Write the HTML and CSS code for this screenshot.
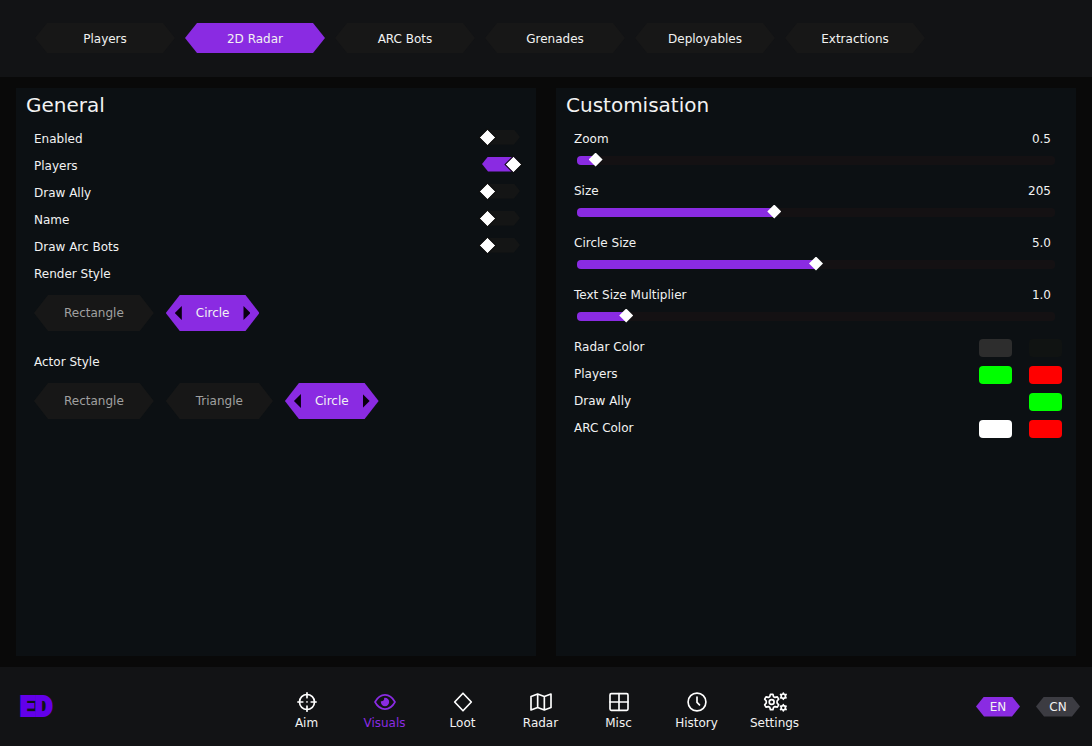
FILE: index.html
```html
<!DOCTYPE html>
<html lang="en">
<head>
<meta charset="utf-8">
<meta name="viewport" content="width=device-width, initial-scale=1">
<title>2D Radar</title>
<link rel="stylesheet" href="styles.css">
</head>
<body>
<header class="topbar">
  <nav class="tabs" aria-label="Visuals sections">
    <button class="tab" type="button">Players</button>
    <button class="tab tab-active" type="button" aria-current="page">2D Radar</button>
    <button class="tab" type="button">ARC Bots</button>
    <button class="tab" type="button">Grenades</button>
    <button class="tab" type="button">Deployables</button>
    <button class="tab" type="button">Extractions</button>
  </nav>
</header>

<main class="panels">
  <section class="panel">
    <h2 class="panel-title">General</h2>
    <label class="row">Enabled<input class="toggle" type="checkbox"></label>
    <label class="row">Players<input class="toggle" type="checkbox" checked></label>
    <label class="row">Draw Ally<input class="toggle" type="checkbox"></label>
    <label class="row">Name<input class="toggle" type="checkbox"></label>
    <label class="row">Draw Arc Bots<input class="toggle" type="checkbox"></label>
    <fieldset class="choice-group">
      <legend class="choice-legend">Render Style</legend>
      <div class="choices">
        <label class="choice"><input class="choice-input" type="radio" name="render">Rectangle</label>
        <label class="choice"><input class="choice-input" type="radio" name="render" checked>Circle</label>
      </div>
    </fieldset>
    <fieldset class="choice-group">
      <legend class="choice-legend">Actor Style</legend>
      <div class="choices">
        <label class="choice"><input class="choice-input" type="radio" name="actor">Rectangle</label>
        <label class="choice"><input class="choice-input" type="radio" name="actor">Triangle</label>
        <label class="choice"><input class="choice-input" type="radio" name="actor" checked>Circle</label>
      </div>
    </fieldset>
  </section>

  <section class="panel">
    <h2 class="panel-title">Customisation</h2>
    <div class="slider-row">
      <label for="zoom">Zoom</label><output for="zoom">0.5</output>
      <input class="slider" id="zoom" type="range" min="0" max="20" step="0.1" value="0.5" style="--fill: 0.025">
    </div>
    <div class="slider-row">
      <label for="size">Size</label><output for="size">205</output>
      <input class="slider" id="size" type="range" min="0" max="500" value="205" style="--fill: 0.41">
    </div>
    <div class="slider-row">
      <label for="circle">Circle Size</label><output for="circle">5.0</output>
      <input class="slider" id="circle" type="range" min="0" max="10" step="0.1" value="5" style="--fill: 0.5">
    </div>
    <div class="slider-row">
      <label for="text">Text Size Multiplier</label><output for="text">1.0</output>
      <input class="slider" id="text" type="range" min="0.1" max="10" step="0.1" value="1" style="--fill: 0.091">
    </div>
    <div class="row color-row">Radar Color
      <span class="swatches">
        <button class="swatch swatch-gray" type="button" aria-label="Radar background color"></button>
        <button class="swatch swatch-dark" type="button" aria-label="Radar border color"></button>
      </span>
    </div>
    <div class="row color-row">Players
      <span class="swatches">
        <button class="swatch swatch-green" type="button" aria-label="Players visible color"></button>
        <button class="swatch swatch-red" type="button" aria-label="Players hidden color"></button>
      </span>
    </div>
    <div class="row color-row">Draw Ally
      <span class="swatches">
        <button class="swatch swatch-green" type="button" aria-label="Ally color"></button>
      </span>
    </div>
    <div class="row color-row">ARC Color
      <span class="swatches">
        <button class="swatch swatch-white" type="button" aria-label="ARC visible color"></button>
        <button class="swatch swatch-red" type="button" aria-label="ARC hidden color"></button>
      </span>
    </div>
  </section>
</main>

<footer class="dock">
  <div class="logo">ED</div>
  <nav class="menu" aria-label="Main">
    <button class="menu-item" type="button">
      <svg class="icon" viewBox="0 0 24 24"><circle cx="12" cy="12" r="9"/><path d="M12 1v6M12 17v6M1 12h6M17 12h6M12 11.900v.2"/></svg>
      Aim
    </button>
    <button class="menu-item menu-item-active" type="button" aria-current="page">
      <svg class="icon icon-wide" viewBox="0 0 28 24"><path d="M2 12C5 6.500 9 3.500 14 3.500s9 3 12 8.500c-3 5.500-7 8.500-12 8.500S5 17.500 2 12z"/><path class="solid" d="M14 7a5 5 0 1 1-5 5c0-.4 0-.7.100-1 1.900.6 4.300-1 3.900-3.900.3-.1.700-.1 1-.1z"/></svg>
      Visuals
    </button>
    <button class="menu-item" type="button">
      <svg class="icon" viewBox="0 0 24 24"><path d="M12 1.500 22 12 12 22.500 2 12z"/></svg>
      Loot
    </button>
    <button class="menu-item" type="button">
      <svg class="icon icon-wide" viewBox="0 0 28 24"><path d="M2 5.500l8-3 8 3 8-3v16l-8 3-8-3-8 3zM10 2.500v16M18 5.500v16"/></svg>
      Radar
    </button>
    <button class="menu-item" type="button">
      <svg class="icon" viewBox="0 0 24 24"><rect x="1.200" y="2" width="21.600" height="20" rx="1.500"/><path d="M12 2v20M1.200 12h21.600"/></svg>
      Misc
    </button>
    <button class="menu-item" type="button">
      <svg class="icon" viewBox="0 0 24 24"><circle cx="12" cy="12" r="10.700"/><path d="M12 6v6.500l3 3"/></svg>
      History
    </button>
    <button class="menu-item" type="button">
      <svg class="icon icon-gears" viewBox="0 0 30 24"><path d="M9.500 2.800h3l.8 2.800 1.700.9 2.800-.6 1.600 2.700-1.900 2.200v2.400l1.900 2.200-1.600 2.700-2.800-.6-1.700.9-.8 2.800h-3l-.8-2.800-1.700-.9-2.800.6-1.600-2.700 1.900-2.200v-2.400l-1.900-2.200 1.600-2.700 2.800.6 1.700-.9z"/><circle cx="11" cy="12" r="2.900"/><circle cx="25" cy="5" r="2.600"/><circle cx="25" cy="19" r="2.600"/><path d="M25 1.200v1M25 7.800v1M21.700 3l.9.600M27.400 6.400l.9.600M21.700 7l.9-.6M27.400 3.600l.9-.6M25 15.200v1M25 21.800v1M21.700 17l.9.600M27.400 20.400l.9.600M21.700 21l.9-.6M27.400 17.600l.9-.6"/></svg>
      Settings
    </button>
  </nav>
  <div class="languages">
    <button class="language language-active" type="button">EN</button>
    <button class="language" type="button">CN</button>
  </div>
</footer>
</body>
</html>
```

FILE: styles.css
```css
:root {
  --accent: #8a2be2;
  --text: #f2f2f2;
  --bar: #121315;
  --panel: #0c1013;
  --control: #171717;
}

* { box-sizing: border-box; }

body {
  margin: 0;
  min-height: 100vh;
  display: flex;
  flex-direction: column;
  background: #090909;
  color: var(--text);
  font-family: "DejaVu Sans", sans-serif;
  font-size: 12px;
  line-height: 16px;
}

button {
  border: 0;
  padding: 0;
  background: none;
  color: inherit;
  font: inherit;
  cursor: pointer;
}

.topbar {
  padding: 23px 35px 24px;
  background: var(--bar);
}

.tabs { display: flex; gap: 10px; }

.tab {
  width: 140px;
  height: 30px;
  padding-top: 2px;
  background: var(--control);
  clip-path: polygon(12px 0, calc(100% - 12px) 0, 100% 50%, calc(100% - 12px) 100%, 12px 100%, 0 50%);
}

.tab-active { background: var(--accent); }

.panels {
  flex: 1;
  display: grid;
  grid-template-columns: 1fr 1fr;
  gap: 20px;
  padding: 11px 16px;
}

.panel {
  padding: 4px 10px;
  background: var(--panel);
}

.panel-title {
  margin: 0 0 7px;
  font-size: 20px;
  line-height: 26px;
  font-weight: 400;
}

.row {
  display: flex;
  align-items: center;
  justify-content: space-between;
  height: 27px;
  padding: 0 4px 0 8px;
}

.toggle {
  appearance: none;
  position: relative;
  width: 42px;
  height: 16px;
  margin: 0 0 2px;
}

.toggle::before {
  content: "";
  position: absolute;
  inset: 0 2px 1px;
  background: #141515;
  clip-path: polygon(6px 0, calc(100% - 6px) 0, 100% 50%, calc(100% - 6px) 100%, 6px 100%, 0 50%);
}

.toggle::after {
  content: "";
  position: absolute;
  top: 2px;
  left: 2px;
  width: 11px;
  height: 11px;
  background: #fff;
  outline: 1px solid #111;
  transform: rotate(45deg);
}

.toggle:checked::before { background: var(--accent); }
.toggle:checked::after { left: 28px; }

.choice-group {
  margin: 0;
  border: 0;
  padding: 0 8px 10px;
}

.choice-legend { padding: 6px 0; }

.choices { display: flex; gap: 12px; padding: 7px 0; }

.choice {
  position: relative;
  height: 36px;
  padding: 0 30px;
  line-height: 36px;
  color: #a0a0a0;
  background: var(--control);
  clip-path: polygon(14px 0, calc(100% - 14px) 0, 100% 50%, calc(100% - 14px) 100%, 14px 100%, 0 50%);
}

.choice:has(:checked) { background: var(--accent); color: var(--text); }

.choice:has(:checked)::before,
.choice:has(:checked)::after {
  content: "";
  position: absolute;
  top: 11px;
  width: 7px;
  height: 14px;
  background: #08000f;
}

.choice:has(:checked)::before { left: 9px; clip-path: polygon(100% 0, 100% 100%, 0 50%); }
.choice:has(:checked)::after { right: 9px; clip-path: polygon(0 0, 100% 50%, 0 100%); }

.choice-input { position: absolute; opacity: 0; margin: 0; }

.slider-row {
  display: grid;
  grid-template-columns: 1fr auto;
  row-gap: 5px;
  height: 52px;
  padding: 6px 15px 0 8px;
  align-content: start;
}

.slider {
  appearance: none;
  grid-column: 1 / -1;
  height: 16px;
  margin: 0 -4px 0 3px;
  background: none;
}

.slider::-webkit-slider-runnable-track {
  height: 9px;
  border-radius: 4px;
  background: linear-gradient(to right, var(--accent) calc(7px + var(--fill) * (100% - 14px)), #141113 0);
}

.slider::-webkit-slider-thumb {
  appearance: none;
  width: 14px;
  height: 14px;
  margin-top: -3px;
  background: #fff;
  clip-path: polygon(50% 0, 100% 50%, 50% 100%, 0 50%);
}

.swatches { display: flex; gap: 17px; padding-top: 2px; }

.swatch { width: 33px; height: 18px; border-radius: 4px; }
.swatch-gray { background: #2d2d2d; }
.swatch-dark { background: #101312; }
.swatch-green { background: #0f0; }
.swatch-red { background: #f00; }
.swatch-white { background: #fff; }

.dock {
  display: grid;
  grid-template-columns: 1fr auto 1fr;
  align-items: center;
  height: 79px;
  padding: 0 12px 0 1px;
  background: var(--bar);
}

.logo {
  padding-left: 19px;
  color: #6200ea;
  font: 900 27px/28px Roboto, sans-serif;
  -webkit-text-stroke: 2px #6200ea;
}

.menu { display: flex; padding-top: 9px; }

.menu-item {
  display: flex;
  flex-direction: column;
  align-items: center;
  gap: 3px;
  width: 78px;
}

.menu-item-active { color: var(--accent); }

.icon {
  width: 20px;
  height: 20px;
  fill: none;
  stroke: #fff;
  stroke-width: 2;
  stroke-linejoin: round;
  stroke-linecap: round;
}

.icon-wide { width: 24px; }
.icon-gears { width: 26px; }
.menu-item-active .icon { stroke: var(--accent); }
.menu-item-active .solid { fill: var(--accent); stroke: none; }

.languages { display: flex; justify-content: flex-end; gap: 16px; }

.language {
  width: 44px;
  height: 20px;
  padding-top: 1px;
  background: #3c3c42;
  clip-path: polygon(8px 0, calc(100% - 8px) 0, 100% 50%, calc(100% - 8px) 100%, 8px 100%, 0 50%);
}

.language-active { background: var(--accent); }
```
